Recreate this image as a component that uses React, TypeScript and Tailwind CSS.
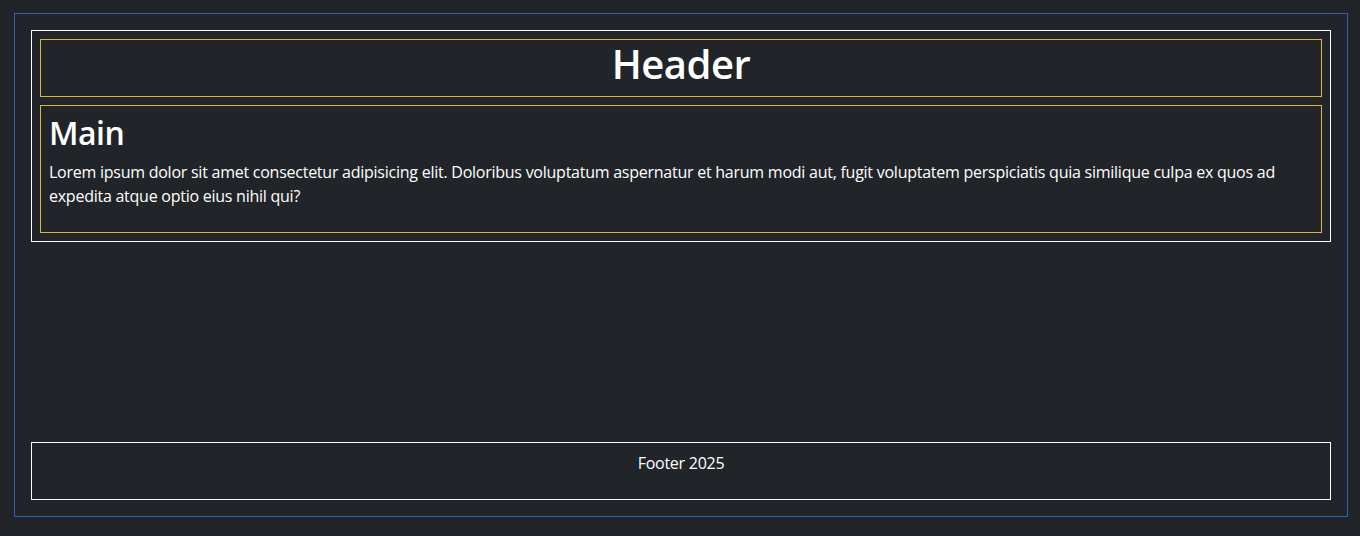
export default function App() {
  return (
    <div
      className="min-h-screen bg-[#212529] text-white pt-[13px] pl-[14px] pr-[12px]"
      style={{ fontFamily: '"Open Sans", "Noto Sans", sans-serif' }}
    >
      <div className="h-[504px] border border-[#2b62b8] p-4 flex flex-col justify-between">
        <div className="border border-white p-2 flex flex-col gap-2">
          <header className="border border-[#dcb444]">
            <h1 className="text-[40px] leading-[1.2] font-semibold tracking-[-0.5px] text-center mb-2">Header</h1>
          </header>
          <main className="border border-[#dcb444] p-2">
            <h2 className="text-[32px] leading-[1.2] font-semibold tracking-[-0.5px] mb-2">Main</h2>
            <p className="text-base leading-6 tracking-[-0.25px] mb-4">
              Lorem ipsum dolor sit amet consectetur adipisicing elit. Doloribus voluptatum aspernatur et harum modi
              aut, fugit voluptatem perspiciatis quia similique culpa ex quos ad expedita atque optio eius nihil qui?
            </p>
          </main>
        </div>
        <footer className="border border-white p-2 text-center">
          <p className="text-base leading-6 tracking-[-0.25px] mb-4">Footer 2025</p>
        </footer>
      </div>
    </div>
  );
}
